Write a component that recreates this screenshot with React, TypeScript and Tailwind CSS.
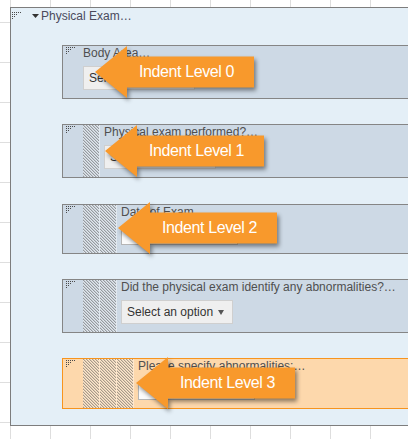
import React from "react";

const Grip = () => (
  <svg width="9" height="8" viewBox="0 0 9 8" className="block" shapeRendering="crispEdges">
    {[
      [0, 0], [2, 0], [4, 0], [6, 0], [8, 0],
      [0, 2], [2, 2], [4, 2],
      [0, 4], [2, 4],
      [0, 6],
    ].map(([x, y], i) => (
      <rect key={i} x={x} y={y} width="1" height="1" fill="#4a4a4a" />
    ))}
  </svg>
);

const Hatch = () => (
  <div className="relative w-[17px] shrink-0 border-r border-r-[rgba(255,255,255,0.4)]">
    <svg className="absolute inset-0 block h-full w-full" shapeRendering="crispEdges">
      <rect width="100%" height="100%" fill="url(#hatchpat)" />
    </svg>
  </div>
);

const SelectBox = () => (
  <div className="mt-[6px] flex h-[24px] w-[112px] items-center justify-between border border-[#cfcfcf] bg-[#efefef] pl-[5px] pr-[8px] text-[12px] text-[#333]">
    <span>Select an option</span>
    <svg width="6" height="5" viewBox="0 0 6 5" className="block">
      <polygon points="0,0 6,0 3,5" fill="#555" />
    </svg>
  </div>
);

const TextInput = ({ h }: { h: number }) => (
  <div
    className="mt-[10px] w-[117px] border border-[#b5b5b5] bg-[#fbfbfb]"
    style={{ height: h }}
  />
);

type BoxProps = {
  level: number;
  label: string;
  control: React.ReactNode;
  highlight?: boolean;
  mt: string;
};

const FieldBox = ({ level, label, control, highlight, mt }: BoxProps) => (
  <div
    className={
      "flex w-[380px] border " +
      mt +
      " " +
      (highlight
        ? "border-[#f7941e] bg-[#fdd8ac]"
        : "border-[#858585] bg-[#cdd9e5]")
    }
  >
    <div className="w-[20px] shrink-0 pl-[3px] pt-[1px]">
      <Grip />
    </div>
    {Array.from({ length: level }).map((_, i) => (
      <Hatch key={i} />
    ))}
    <div className={"pb-[8px] " + (level > 0 ? "pl-[4px]" : "")}>
      <div className="h-[14px] whitespace-nowrap text-[12px] leading-[14px] text-[#4f4f4f]">
        {label}
      </div>
      {control}
    </div>
  </div>
);

const Callout = ({ left, top, text }: { left: number; top: number; text: string }) => (
  <div className="absolute" style={{ left, top, width: 162, height: 56 }}>
    <svg
      width="162"
      height="56"
      viewBox="0 0 162 56"
      className="absolute left-0 top-0 overflow-visible drop-shadow-[2px_3px_2px_rgba(0,0,0,0.45)]"
    >
      <polygon
        points="0,26 32,0 32,10.5 159,10.5 159,41.5 32,41.5 32,52"
        fill="#f8992c"
      />
    </svg>
    <div className="absolute left-[44px] top-[10px] flex h-[31px] items-center whitespace-nowrap text-[16px] leading-none tracking-[-0.4px] text-white">
      {text}
    </div>
  </div>
);

export default function App() {
  return (
    <div className="relative h-[439px] w-[408px] overflow-hidden bg-white pl-[10px] pt-[7px] font-['Liberation_Sans',Arial,sans-serif] [background-image:linear-gradient(to_right,#dedede_1px,transparent_1px),linear-gradient(to_bottom,#dedede_1px,transparent_1px)] [background-position:10px_22px] [background-size:40px_40px]">
      <svg width="0" height="0" className="absolute">
        <defs>
          <pattern id="hatchpat" width="3" height="3" patternUnits="userSpaceOnUse">
            <rect x="0" y="0" width="3" height="3" fill="rgba(255,255,255,0.38)" />
            <rect x="0" y="0" width="1" height="1" fill="rgba(40,40,40,0.4)" />
            <rect x="1" y="1" width="1" height="1" fill="rgba(40,40,40,0.4)" />
            <rect x="2" y="2" width="1" height="1" fill="rgba(40,40,40,0.4)" />
            <rect x="1" y="0" width="1" height="1" fill="rgba(40,40,40,0.15)" />
            <rect x="2" y="1" width="1" height="1" fill="rgba(40,40,40,0.15)" />
            <rect x="0" y="2" width="1" height="1" fill="rgba(40,40,40,0.15)" />
          </pattern>
        </defs>
      </svg>

      <div className="w-[460px] border border-[#7d7d7d] bg-[#e4eff7] pb-[16px]">
        <div className="mt-[1px] flex h-[14px] items-center">
          <div className="ml-[1px]">
            <Grip />
          </div>
          <svg width="7" height="4" viewBox="0 0 7 4" className="ml-[11px] block">
            <polygon points="0,0 7,0 3.5,4" fill="#333" />
          </svg>
          <span className="ml-[2px] text-[12px] leading-[14px] text-[#4a4a5c]">
            Physical Exam…
          </span>
        </div>

        <div className="ml-[51px] flex flex-col">
          <FieldBox mt="mt-[22px]" level={0} label="Body Area…" control={<SelectBox />} />
          <FieldBox
            mt="mt-[25px]"
            level={1}
            label="Physical exam performed?…"
            control={<SelectBox />}
          />
          <FieldBox
            mt="mt-[26px]"
            level={2}
            label="Date of Exam…"
            control={<TextInput h={16} />}
          />
          <FieldBox
            mt="mt-[25px]"
            level={2}
            label="Did the physical exam identify any abnormalities?…"
            control={<SelectBox />}
          />
          <FieldBox
            mt="mt-[25px]"
            level={3}
            highlight
            label="Please specify abnormalities:…"
            control={<TextInput h={17} />}
          />
        </div>
      </div>

      <Callout left={95} top={46} text="Indent Level 0" />
      <Callout left={105} top={125} text="Indent Level 1" />
      <Callout left={118} top={202} text="Indent Level 2" />
      <Callout left={136} top={357} text="Indent Level 3" />
    </div>
  );
}
